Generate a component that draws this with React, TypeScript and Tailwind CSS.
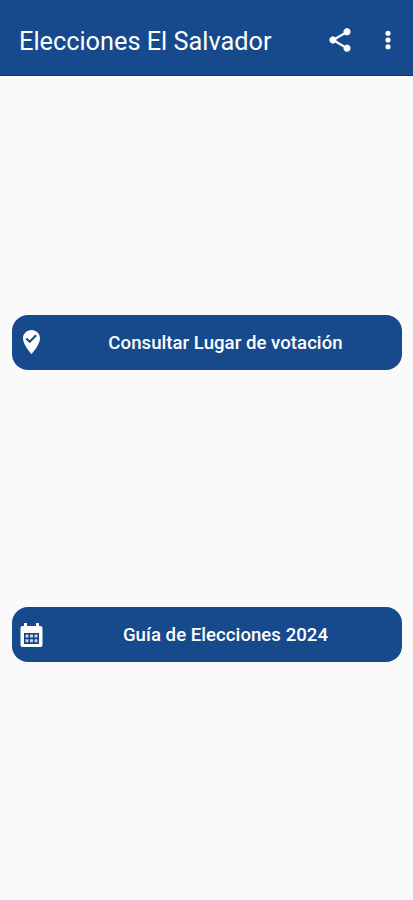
import React from "react";

function PlaceIcon() {
  return (
    <svg viewBox="0 0 28 28" className="-mt-px h-[28px] w-[28px] fill-white">
      <path
        fillRule="evenodd"
        d="M13.5 2C8.7 2 5 5.7 5 10.4C5 16.6 13.5 26 13.5 26S22 16.6 22 10.4C22 5.7 18.3 2 13.5 2zM11.7 15.2L7.6 11.3L9.1 9.8L11.7 12.2L17.4 6.6L18.9 8.1z"
      />
    </svg>
  );
}

function CalendarIcon() {
  return (
    <svg viewBox="0 0 28 28" className="h-[28px] w-[28px] fill-white">
      <path d="M6 2h3v3h9V2h3v3h1.5a2 2 0 0 1 2 2v17a2 2 0 0 1-2 2h-18a2 2 0 0 1-2-2V7a2 2 0 0 1 2-2H6z" />
      <rect x="6" y="12" width="15" height="11" className="fill-[#123f85]" />
      <path className="fill-[#cbd6ea]" d="M7.5 13.5h3v3h-3zM12 13.5h3v3h-3zM16.5 13.5h3v3h-3zM7.5 18.2h3v3h-3zM12 18.2h3v3h-3zM16.5 18.2h3v3h-3z" />
    </svg>
  );
}

function ActionButton({ icon, label }: { icon: React.ReactNode; label: string }) {
  return (
    <button className="flex h-[54.5px] w-full items-center rounded-[16px] bg-[#174a8c] px-[6px] text-white">
      {icon}
      <span className="flex-1 pl-[9px] pt-[3px] text-center text-[18.6px] font-medium tracking-[0.04px]">{label}</span>
    </button>
  );
}

export default function App() {
  return (
    <div className="flex h-[900px] w-[413px] flex-col bg-[#fafafa] font-['Roboto',sans-serif]">
      <header className="flex h-[76px] items-center border-b border-[#0c347c] bg-[#174a8c] pl-[19px] text-white">
        <h1 className="mt-[9px] flex-1 text-[25.3px]">Elecciones El Salvador</h1>
        <svg viewBox="0 0 24 24" className="mt-[5px] h-[28px] w-[28px] fill-white">
          <path d="M18 16.08c-.76 0-1.44.3-1.96.77L8.91 12.7c.05-.23.09-.46.09-.7s-.04-.47-.09-.7l7.05-4.11c.54.5 1.25.81 2.04.81 1.66 0 3-1.34 3-3s-1.34-3-3-3-3 1.34-3 3c0 .24.04.47.09.7L8.04 9.81C7.5 9.31 6.79 9 6 9c-1.66 0-3 1.34-3 3s1.34 3 3 3c.79 0 1.5-.31 2.04-.81l7.12 4.16c-.05.21-.08.43-.08.65 0 1.61 1.31 2.92 2.92 2.92s2.92-1.31 2.92-2.92-1.31-2.92-2.92-2.92z" stroke="white" strokeWidth="0.2" />
        </svg>
        <svg viewBox="0 0 24 24" className="ml-[20px] mr-[11px] mt-[5px] h-[28px] w-[28px] fill-white">
          <circle cx="12" cy="6.2" r="2.2" />
          <circle cx="12" cy="12" r="2.2" />
          <circle cx="12" cy="17.8" r="2.2" />
        </svg>
      </header>
      <main className="flex flex-1 flex-col gap-[237.5px] pl-[12px] pr-[11px] pt-[239.3px]">
        <ActionButton icon={<PlaceIcon />} label="Consultar Lugar de votación" />
        <ActionButton icon={<CalendarIcon />} label="Guía de Elecciones 2024" />
      </main>
    </div>
  );
}
